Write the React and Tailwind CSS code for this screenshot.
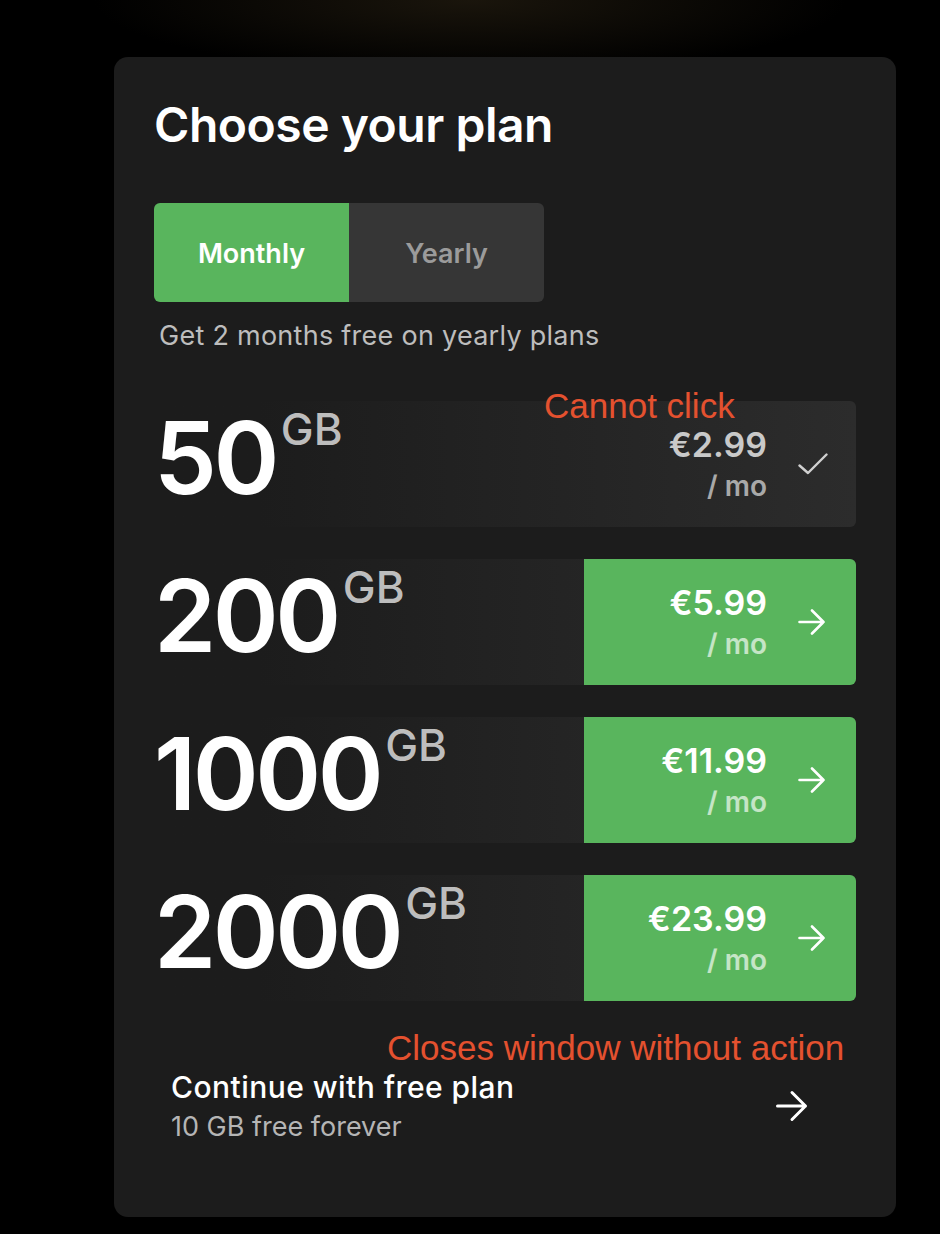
import React from "react"

const plans = [
  { size: "50", price: "€2.99", current: true },
  { size: "200", price: "€5.99" },
  { size: "1000", price: "€11.99" },
  { size: "2000", price: "€23.99" },
]

function ArrowIcon({ className }) {
  return (
    <svg viewBox="0 0 28 26" className={className} fill="none" stroke="currentColor" strokeWidth="2.6" strokeLinecap="round" strokeLinejoin="round">
      <path d="M1.5 13h24M14 1.5 25.5 13 14 24.5" />
    </svg>
  )
}

function CheckIcon({ className }) {
  return (
    <svg viewBox="0 0 30 22" className={className} fill="none" stroke="currentColor" strokeWidth="2.4" strokeLinecap="round" strokeLinejoin="round">
      <path d="M1.5 12.5 10 20 28.5 1.5" />
    </svg>
  )
}

function PlanRow({ plan }) {
  return (
    <div className="flex h-[126px] rounded-r-[6px] bg-gradient-to-r from-[#1c1c1c] from-15% to-[#2c2c2c]">
      <div className="flex flex-1 items-start">
        <span className="text-[100px] font-semibold leading-[1.14] tracking-[-0.035em] text-white">{plan.size}</span>
        <span className="ml-[5px] mt-[2px] text-[44px] font-medium leading-[1.2] text-[#bdbdbd]">GB</span>
      </div>
      {plan.current ? (
        <div className="flex w-[272px] items-center justify-end pr-[28px]">
          <div className="flex flex-col items-end">
            <span className="text-[34px] font-semibold leading-none text-[#c9c9c9]">{plan.price}</span>
            <span className="mt-[10px] text-[28px] font-semibold leading-none text-[#a9a9a9]">/ mo</span>
          </div>
          <CheckIcon className="ml-[31px] h-[22px] w-[30px] text-[#d0d0d0]" />
        </div>
      ) : (
        <div className="flex w-[272px] items-center justify-end rounded-r-[6px] bg-[#59b55d] pr-[30px]">
          <div className="flex flex-col items-end">
            <span className="text-[34px] font-semibold leading-none text-white">{plan.price}</span>
            <span className="mt-[10px] text-[28px] font-semibold leading-none text-white/65">/ mo</span>
          </div>
          <ArrowIcon className="ml-[31px] h-[26px] w-[28px] text-white" />
        </div>
      )}
    </div>
  )
}

export default function App() {
  return (
    <div className="min-h-[1234px] bg-black bg-[radial-gradient(ellipse_40%_6%_at_50%_0%,#1a150c,#000)] pl-[114px] pt-[57px] font-['Inter',sans-serif]">
      <div className="relative h-[1160px] w-[782px] rounded-[14px] bg-[#1c1c1c] px-10 pt-[44px]">
        <h1 className="text-[48px] font-semibold leading-none tracking-[-0.01em] text-white">Choose your plan</h1>

        {/* billing toggle */}
        <div className="mt-[54px] flex h-[99px] w-[390px] overflow-hidden rounded-[6px]">
          <button className="flex-1 bg-[#59b55d] pt-[3px] text-[27px] font-semibold text-white">Monthly</button>
          <button className="flex-1 bg-[#363636] pt-[3px] text-[27px] font-semibold text-[#9b9b9b]">Yearly</button>
        </div>
        <p className="mt-[20px] pl-[5px] text-[27px] leading-none tracking-[0.01em] text-[#bdbdbd]">Get 2 months free on yearly plans</p>

        <div className="mt-[52px] flex flex-col gap-8">
          {plans.map((p) => (
            <PlanRow key={p.size} plan={p} />
          ))}
        </div>

        {/* free plan */}
        <div className="mt-[71px] flex items-center justify-between pl-[17px] pr-[48px]">
          <div>
            <div className="text-[30px] font-medium leading-none tracking-[0.015em] text-white">Continue with free plan</div>
            <div className="mt-[11px] text-[27px] leading-none text-[#b5b5b5]">10 GB free forever</div>
          </div>
          <svg viewBox="0 0 32 32" className="h-[32px] w-[32px] text-white" fill="none" stroke="currentColor" strokeWidth="3" strokeLinecap="round" strokeLinejoin="round">
            <path d="M1.5 16h28M16 2.5 29.5 16 16 29.5" />
          </svg>
        </div>

        {/* annotations */}
        <span className="absolute left-[430px] top-[331px] font-['Liberation_Sans',sans-serif] text-[35px] leading-none text-[#e4512f]">Cannot click</span>
        <span className="absolute left-[273px] top-[973px] font-['Liberation_Sans',sans-serif] text-[35px] leading-none text-[#e4512f]">Closes window without action</span>
      </div>
    </div>
  )
}
